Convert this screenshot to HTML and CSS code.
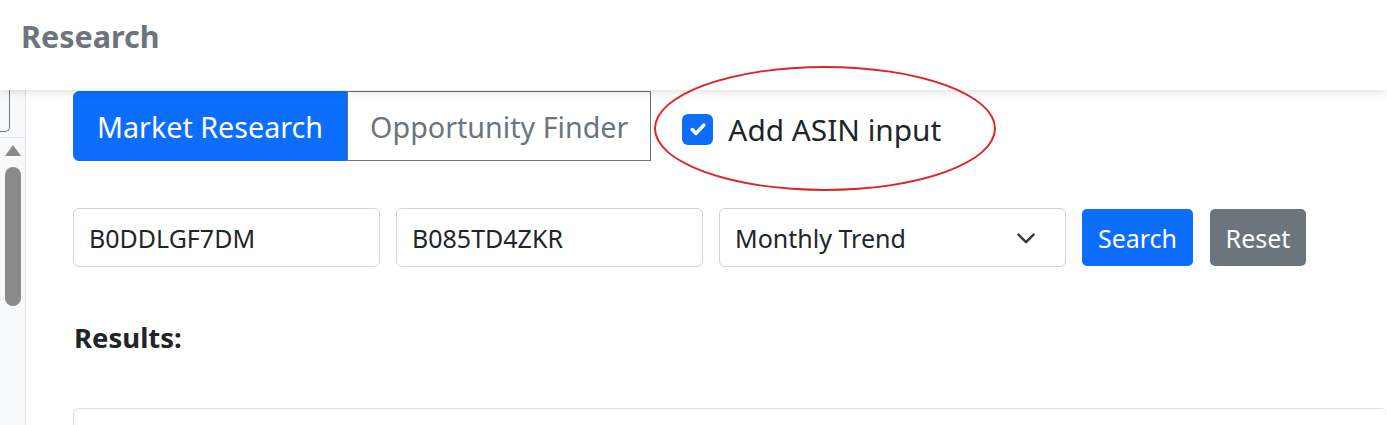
FILE: index.html
```html
<!DOCTYPE html>
<html lang="en">
<head>
  <meta charset="UTF-8">
  <meta name="viewport" content="width=device-width, initial-scale=1.0">
  <title>Research</title>
  <link rel="stylesheet" href="styles.css">
</head>
<body>
  <header class="top-bar">Research</header>
  <div class="layout">
    <aside class="side">
      <div class="side-box"></div>
      <div class="side-scroll">
        <div class="arrow-up"></div>
        <div class="thumb"></div>
      </div>
    </aside>
    <main class="content">
      <div class="tab-row">
        <div class="tabs">
          <button class="tab active">Market Research</button>
          <button class="tab">Opportunity Finder</button>
        </div>
        <label class="check">
          <span class="box">
            <svg viewBox="0 0 16 16" width="22" height="22"><path d="M3.8 8.4l2.8 2.8 5.6-6" fill="none" stroke="#fff" stroke-width="2.6" stroke-linecap="round" stroke-linejoin="round"/></svg>
          </span>
          Add ASIN input
          <span class="ring"></span>
        </label>
      </div>
      <div class="search-row">
        <input class="field" type="text" value="B0DDLGF7DM">
        <input class="field" type="text" value="B085TD4ZKR">
        <div class="select">
          <span>Monthly Trend</span>
          <svg viewBox="0 0 16 16" width="22" height="22"><path d="M2.5 5.5l5.5 5.5 5.5-5.5" fill="none" stroke="#343a40" stroke-width="1.8" stroke-linecap="round" stroke-linejoin="round"/></svg>
        </div>
        <button class="btn blue">Search</button>
        <button class="btn gray">Reset</button>
      </div>
      <h3 class="results">Results:</h3>
      <div class="card"></div>
    </main>
  </div>
</body>
</html>
```
FILE: styles.css
```css
body {
  margin: 0;
  font-family: "Noto Sans", "Open Sans", sans-serif;
  color: #212529;
  background: #fff;
  overflow: hidden;
}
.top-bar {
  position: relative;
  z-index: 5;
  height: 90px;
  box-sizing: border-box;
  padding: 15px 21px;
  font-size: 30.5px;
  font-weight: bold;
  color: #6c757d;
  background: #fff;
  box-shadow: 0 2px 8px rgba(0, 0, 0, 0.12);
}
.layout {
  display: flex;
  height: 335px;
}
.side {
  width: 26px;
  flex-shrink: 0;
  background: #f8f9fa;
  border-right: 1px solid #dee2e6;
  box-sizing: border-box;
}
.side-box {
  width: 10px;
  height: 42px;
  border: 1px solid #6c757d;
  border-left: none;
  border-top: none;
  border-bottom-right-radius: 5px;
  box-sizing: border-box;
}
.side-scroll {
  border-top: 1px solid #dee2e6;
  margin-top: 5px;
  padding: 7px 5px 0;
}
.arrow-up {
  width: 0;
  height: 0;
  margin: 0 auto;
  border-left: 8px solid transparent;
  border-right: 8px solid transparent;
  border-bottom: 11px solid #8a8a8a;
}
.thumb {
  margin-top: 11px;
  width: 16px;
  height: 139px;
  border-radius: 8px;
  background: #8a8a8a;
}
.content {
  flex: 1;
  padding: 1px 0 0 47px;
}
.tab-row {
  display: flex;
  align-items: center;
}
.tabs {
  display: flex;
}
.tab {
  font-family: inherit;
  font-size: 28.7px;
  height: 70px;
  padding: 0 22px;
  border: 1px solid #6c757d;
  background: #fff;
  color: #6c757d;
  border-radius: 0;
}
.tab.active {
  background: #0d6efd;
  border-color: #0d6efd;
  color: #fff;
  border-radius: 6px 0 0 6px;
  padding: 0 23px;
}
.check {
  position: relative;
  display: flex;
  align-items: center;
  gap: 15px;
  margin: 6px 0 0 31px;
  font-size: 29.8px;
  color: #212529;
}
.box {
  width: 31px;
  height: 31px;
  border-radius: 6px;
  background: #0d6efd;
  display: flex;
  align-items: center;
  justify-content: center;
}
.ring {
  position: absolute;
  z-index: 10;
  left: -28px;
  top: 50%;
  margin-top: -63px;
  width: 342px;
  height: 125px;
  box-sizing: border-box;
  border: 2px solid #dc2626;
  border-radius: 50%;
}
.search-row {
  display: flex;
  align-items: center;
  gap: 16px;
  margin-top: 47px;
}
.field, .select {
  font-family: inherit;
  font-size: 25px;
  height: 59px;
  box-sizing: border-box;
  border: 1px solid #ced4da;
  border-radius: 6px;
  padding: 0 15px;
  color: #212529;
  background: #fff;
}
.field {
  width: 307px;
}
.select {
  width: 347px;
  display: flex;
  align-items: center;
  justify-content: space-between;
  padding-right: 28px;
}
.btn {
  font-family: inherit;
  font-size: 25px;
  height: 57px;
  padding: 0;
  border: none;
  border-radius: 5px;
  color: #fff;
}
.btn.blue {
  background: #0d6efd;
  width: 111px;
}
.btn.gray {
  background: #6c757d;
  width: 96px;
  margin-left: 1px;
}
.results {
  margin: 52px 0 0 1px;
  font-size: 27.5px;
  font-weight: bold;
}
.card {
  margin-top: 52px;
  height: 60px;
  border: 1px solid #dee2e6;
  border-radius: 6px;
  border-right: none;
}
```
